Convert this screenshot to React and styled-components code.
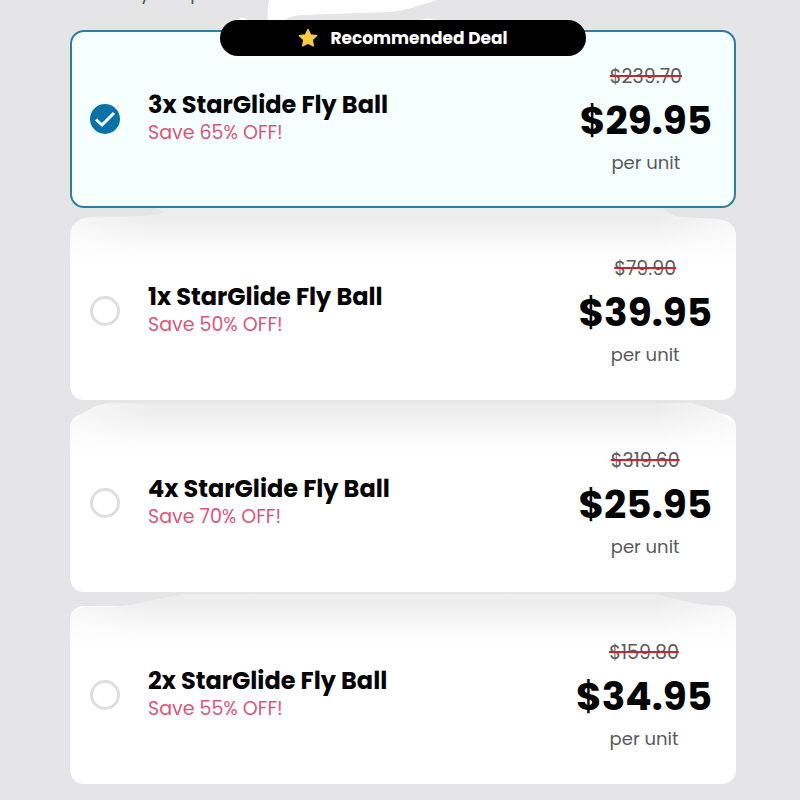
import React, { useState } from "react";
import styled, { createGlobalStyle } from "styled-components";

const GlobalStyle = createGlobalStyle`
  *, *::before, *::after { box-sizing: border-box; }
  body {
    margin: 0;
    background: #e5e5e8;
    color: #050505;
    font-family: Poppins, Inter, sans-serif;
  }
`;

const Page = styled.main`
  padding: 0 64px 15px 70px;
`;

const Intro = styled.header`
  position: relative;
  height: 30px;
`;

const IntroText = styled.p`
  display: flex;
  gap: 40px;
  height: 4px;
  margin: 0;
  padding-left: 70px;
  overflow: hidden;
  align-items: flex-end;
  color: #55555a;
  font-size: 18px;
  line-height: 22px;
`;

const Swoosh = styled.svg`
  position: absolute;
  top: 0;
  left: 160px;
  width: 220px;
  height: 30px;
`;

const Deals = styled.form`
  display: flex;
  flex-direction: column;
  gap: 14px;
`;

const Card = styled.label`
  position: relative;
  display: grid;
  grid-template-columns: 30px 1fr auto;
  column-gap: 28px;
  align-items: center;
  min-height: 178px;
  padding: 24px 22px 24px 18px;
  border: 2px solid ${(p) => (p.$active ? "#2f7d9f" : "#fff")};
  border-radius: 14px;
  background: ${(p) => (p.$active ? "#f5fffe" : "#fff")};
  cursor: pointer;
`;

const Swell = styled.svg`
  position: absolute;
  top: -16px;
  left: -2px;
  width: calc(100% + 4px);
  height: 64px;
  pointer-events: none;
`;

const Badge = styled.span`
  position: absolute;
  top: -12px;
  left: 0;
  right: 0;
  display: flex;
  align-items: center;
  justify-content: center;
  gap: 12px;
  width: 366px;
  max-width: 90%;
  height: 36px;
  margin: 0 auto;
  border-radius: 18px;
  background: #000;
  color: #fff;
  font-size: 17px;
  font-weight: 700;
  line-height: 24px;
  white-space: nowrap;
`;

const RadioBox = styled.span`
  position: relative;
  display: grid;
`;

const Radio = styled.input`
  appearance: none;
  width: 30px;
  height: 30px;
  margin: 0;
  border: 3px solid #dedede;
  border-radius: 50%;
  background: #fff;
  cursor: pointer;

  &:checked {
    border-color: #0b72a8;
    background: #0b72a8;
  }
`;

const Tick = styled.svg`
  position: absolute;
  inset: 0;
  width: 30px;
  height: 30px;
  pointer-events: none;
`;

const Details = styled.span`
  position: relative;
  display: flex;
  flex-direction: column;
`;

const Title = styled.span`
  font-size: 24px;
  font-weight: 700;
  line-height: 28px;
`;

const Saving = styled.span`
  color: #d9577a;
  font-size: 19px;
  line-height: 28px;
`;

const Pricing = styled.span`
  position: relative;
  display: flex;
  flex-direction: column;
  align-items: center;
`;

const OldPrice = styled.s`
  color: #5c5c5c;
  font-size: 19px;
  line-height: 36px;
  text-decoration: line-through 2px #c9252d;
`;

const Price = styled.strong`
  font-size: 39px;
  font-weight: 700;
  line-height: 52px;
`;

const Unit = styled.span`
  color: #58585a;
  font-size: 18px;
  line-height: 32px;
`;

const swells = {
  one: "M0 64V26Q2 10 22 9L72 8Q88 7 95 4L84 0H594Q598 7 610 9L648 11Q666 13 666 30V64Z",
  four: "M0 64V30Q7 14 20 9Q28 4 40 3H620Q632 6 644 10Q660 17 666 30V64Z",
  two: "M0 64V30Q2 15 18 15H40Q60 14 78 9L114 2H584L618 10Q630 13 652 14Q666 16 666 30V64Z",
};

const offers = [
  { id: "three", title: "3x StarGlide Fly Ball", save: "Save 65% OFF!", old: "$239.70", price: "$29.95", best: true },
  { id: "one", title: "1x StarGlide Fly Ball", save: "Save 50% OFF!", old: "$79.90", price: "$39.95" },
  { id: "four", title: "4x StarGlide Fly Ball", save: "Save 70% OFF!", old: "$319.60", price: "$25.95" },
  { id: "two", title: "2x StarGlide Fly Ball", save: "Save 55% OFF!", old: "$159.80", price: "$34.95" },
];

function CardSwell({ id }) {
  return (
    <Swell viewBox="0 0 666 64" preserveAspectRatio="none" aria-hidden="true">
      <defs>
        <linearGradient id={`fade-${id}`} x1="0" y1="0" x2="0" y2="64" gradientUnits="userSpaceOnUse">
          <stop offset="0" stopColor="#ececed" />
          <stop offset="0.25" stopColor="#efeff0" />
          <stop offset="0.55" stopColor="#f9f9f9" />
          <stop offset="0.9" stopColor="#fff" />
        </linearGradient>
        <linearGradient id={`edge-${id}`}>
          <stop offset="0" stopColor="#fff" stopOpacity="0.6" />
          <stop offset="0.12" stopColor="#fff" stopOpacity="0" />
          <stop offset="0.88" stopColor="#fff" stopOpacity="0" />
          <stop offset="1" stopColor="#fff" stopOpacity="0.6" />
        </linearGradient>
      </defs>
      <path d={swells[id]} fill={`url(#fade-${id})`} />
      <path d={swells[id]} fill={`url(#edge-${id})`} />
    </Swell>
  );
}

function Star() {
  return (
    <svg width="20" height="20" viewBox="0 0 20 20" aria-hidden="true">
      <path
        d="M10 1.5 12.6 7 18.5 7.7 14.2 11.8 15.3 17.8 10 15 4.7 17.8 5.8 11.8 1.5 7.7 7.4 7Z"
        fill="#f8cb45"
        stroke="#f8cb45"
        strokeWidth="1.5"
        strokeLinejoin="round"
      />
    </svg>
  );
}

function Offer({ offer, checked, onSelect }) {
  return (
    <Card $active={checked}>
      {!offer.best && !checked && <CardSwell id={offer.id} />}
      {offer.best && (
        <Badge>
          <Star />
          Recommended Deal
        </Badge>
      )}
      <RadioBox>
        <Radio type="radio" name="deal" value={offer.id} checked={checked} onChange={onSelect} />
        {checked && (
          <Tick viewBox="0 0 30 30" aria-hidden="true">
            <path d="M6 15.5 12 21 24 9" fill="none" stroke="#f5fffe" strokeWidth="3" />
          </Tick>
        )}
      </RadioBox>
      <Details>
        <Title>{offer.title}</Title>
        <Saving>{offer.save}</Saving>
      </Details>
      <Pricing>
        <OldPrice>{offer.old}</OldPrice>
        <Price>{offer.price}</Price>
        <Unit>per unit</Unit>
      </Pricing>
    </Card>
  );
}

export default function App() {
  const [selected, setSelected] = useState("three");
  return (
    <>
      <GlobalStyle />
      <Page>
        <Intro>
          <Swoosh viewBox="0 0 220 30" aria-hidden="true">
            <path
              d="M39 0H207Q202 2 190 5Q174 11 158 12L72 15Q58 16 55 20V30H7V20Q12 16 18 20H38Q37 10 39 0ZM186 22Q196 16 208 20V24Z"
              fill="#fff"
            />
          </Swoosh>
          <IntroText>
            <span>y</span>
            <span>p</span>
          </IntroText>
        </Intro>
        <Deals>
          {offers.map((offer) => (
            <Offer
              key={offer.id}
              offer={offer}
              checked={selected === offer.id}
              onSelect={() => setSelected(offer.id)}
            />
          ))}
        </Deals>
      </Page>
    </>
  );
}
